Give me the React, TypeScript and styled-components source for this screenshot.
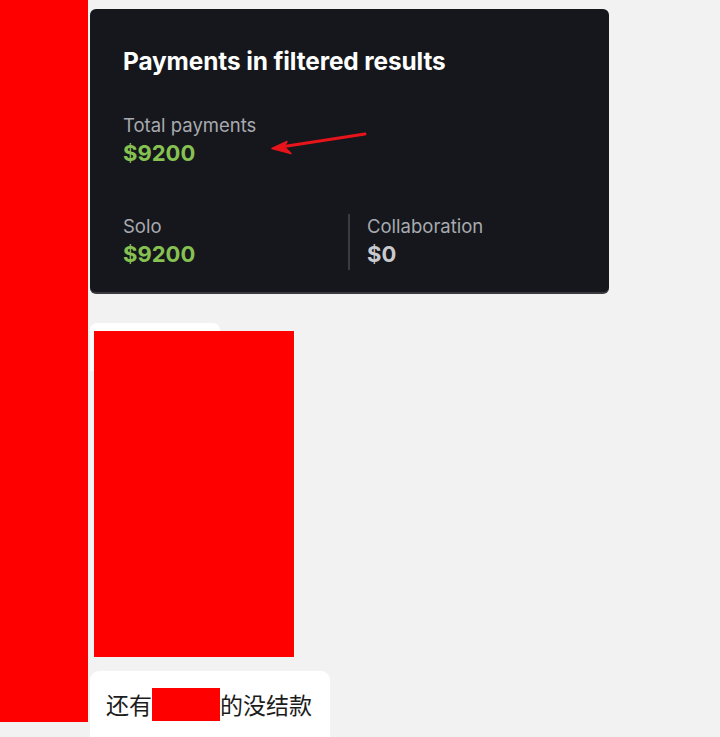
import React from "react";
import styled, { createGlobalStyle } from "styled-components";

const Global = createGlobalStyle`
  html, body { margin: 0; padding: 0; background: #f2f2f2; }
  body { font-family: Inter, "Noto Sans", sans-serif; overflow: hidden; height: 737px; }
`;

const Page = styled.div`
  display: flex;
  align-items: flex-start;
  gap: 2px;
  height: 737px;
`;

const Redaction = styled.div<{ $w: number; $h: number }>`
  width: ${(p) => p.$w}px;
  height: ${(p) => p.$h}px;
  background: #ff0000;
  flex-shrink: 0;
`;

const Column = styled.div`
  display: flex;
  flex-direction: column;
  padding-top: 9px;
`;

const Card = styled.section`
  position: relative;
  width: 519px;
  height: 285px;
  box-sizing: border-box;
  background: #15171c;
  border-radius: 6px;
  border-bottom: 2px solid #3a3b40;
  padding: 35px 33px 0;
  display: flex;
  flex-direction: column;
`;

const Title = styled.h2`
  margin: 0;
  color: #ffffff;
  font-size: 24.4px;
  font-weight: 700;
  line-height: 34px;
  letter-spacing: -0.1px;
`;

const Stat = styled.div`
  display: flex;
  flex-direction: column;
`;

const Label = styled.div`
  color: #a8aab0;
  font-size: 18.5px;
  line-height: 24px;
`;

const Value = styled.div<{ $muted?: boolean }>`
  color: ${(p) => (p.$muted ? "#c9cace" : "#86c152")};
  font-size: 22px;
  font-weight: 700;
  line-height: 32px;
`;

const TotalBlock = styled(Stat)`
  margin-top: 35px;
`;

const Split = styled.div`
  display: grid;
  grid-template-columns: 225px 1fr;
  margin-top: 45px;
`;

const SplitCell = styled(Stat)<{ $divided?: boolean }>`
  padding-left: ${(p) => (p.$divided ? "17px" : "0")};
  border-left: ${(p) => (p.$divided ? "2px solid #3a3c42" : "none")};
`;

const Arrow = styled.svg`
  position: absolute;
  left: 178px;
  top: 118px;
  width: 100px;
  height: 30px;
  overflow: visible;
`;

const ImageMessage = styled.div`
  margin-top: 29px;
  display: flex;
  flex-direction: column;
`;

const BubbleTab = styled.div`
  width: 130px;
  height: 8px;
  background: #ffffff;
  border-radius: 7px 7px 0 0;
`;

const ImageRow = styled.div`
  display: flex;
`;

const BubbleEdge = styled.div`
  width: 4px;
  height: 40px;
  background: #fafafa;
`;

const Photo = styled.div`
  width: 200px;
  height: 326px;
  background: #ff0000;
  box-shadow: 1px 0 0 #fafafa;
`;

const TextBubble = styled.div`
  margin-top: 14px;
  width: 240px;
  height: 82px;
  box-sizing: border-box;
  background: #ffffff;
  border-radius: 9px;
  padding: 17px 16px;
  display: flex;
  align-items: flex-start;
  align-self: flex-start;
  font-family: "Noto Sans CJK SC", "Noto Sans", sans-serif;
  font-size: 23px;
  line-height: 33px;
  color: #1c1c1c;
  white-space: nowrap;
`;

const InlineRedaction = styled.span`
  display: inline-block;
  width: 68px;
  height: 33px;
  background: #ff0000;
`;

export default function App() {
  return (
    <>
      <Global />
      <Page>
        <Redaction $w={88} $h={722} />
        <Column>
          <Card>
            <Title>Payments in filtered results</Title>
            <TotalBlock>
              <Label>Total payments</Label>
              <Value>$9200</Value>
            </TotalBlock>
            <Split>
              <SplitCell>
                <Label>Solo</Label>
                <Value>$9200</Value>
              </SplitCell>
              <SplitCell $divided>
                <Label>Collaboration</Label>
                <Value $muted>$0</Value>
              </SplitCell>
            </Split>
            <Arrow viewBox="178 118 100 30">
              <path d="M275 125 L194 137.5" stroke="#e8141b" strokeWidth="3" strokeLinecap="round" fill="none" />
              <path d="M182 139.5 L197 132.5 L194 137.5 L201 144.5 Z" fill="#e8141b" stroke="#e8141b" strokeWidth="1.5" strokeLinejoin="round" />
            </Arrow>
          </Card>
          <ImageMessage>
            <BubbleTab />
            <ImageRow>
              <BubbleEdge />
              <Photo />
            </ImageRow>
          </ImageMessage>
          <TextBubble>
            还有<InlineRedaction />的没结款
          </TextBubble>
        </Column>
      </Page>
    </>
  );
}
